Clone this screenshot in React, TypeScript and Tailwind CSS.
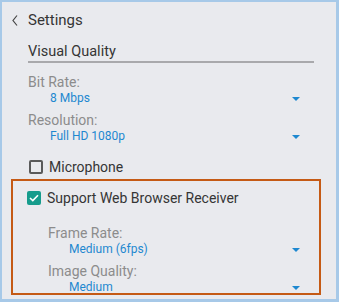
import React from 'react'

const blue = 'text-[#1e88d0]'

function Caret() {
  return (
    <svg width="8" height="4" viewBox="0 0 8 4" className="shrink-0">
      <polygon points="0,0 8,0 4,4" fill="#1e88d0" />
    </svg>
  )
}

function Dropdown({ label, value, valueIndent }: { label: string; value: string; valueIndent: string }) {
  return (
    <div>
      <div className="text-[14px] leading-[16px] text-[#8c8c8c]">{label}</div>
      <div className="flex items-center justify-between h-[17px]">
        <span className={`text-[12px] leading-[17px] ${blue} ${valueIndent}`}>{value}</span>
        <Caret />
      </div>
    </div>
  )
}

export default function App() {
  return (
    <div
      className="w-[339px] h-[302px] bg-[#e9eaee] border-[#a7c9e8] border-l-2 border-t-2 border-r-[3px] border-b-[3px] overflow-hidden"
      style={{ fontFamily: 'Roboto, "Liberation Sans", sans-serif' }}
    >
      {/* Header */}
      <div className="flex items-center h-[37px]">
        <svg width="6" height="11" viewBox="0 0 6 11" className="ml-[10px]">
          <polyline points="5,0.5 1,5.5 5,10.5" fill="none" stroke="#444" strokeWidth="1.2" />
        </svg>
        <span className="ml-[10px] text-[15px] text-[#353535]">Settings</span>
      </div>

      <div className="ml-[26px] w-[286px]">
        {/* Visual Quality */}
        <div className="mt-[3px] text-[14.5px] leading-[19px] text-[#353535]">Visual Quality</div>
        <div className="h-[2px] bg-[#a9a9ac]" />

        <div className="w-[272px]">
          <div className="mt-[11px]">
            <Dropdown label="Bit Rate:" value="8 Mbps" valueIndent="pl-[22px]" />
          </div>
          <div className="mt-[5px]">
            <Dropdown label="Resolution:" value="Full HD 1080p" valueIndent="pl-[22px]" />
          </div>
        </div>

        {/* Microphone */}
        <div className="flex items-center h-[20px] mt-[12px]">
          <span className="w-[14px] h-[14px] ml-[1px] rounded-[2px] border-2 border-[#5a5a5a]" />
          <span className="ml-[6px] text-[14px] text-[#353535]">Microphone</span>
        </div>
      </div>

      {/* Web browser receiver group */}
      <div className="ml-[9px] mt-[2px] w-[310px] h-[116px] border-2 border-[#c55a15]">
        <div className="flex items-center h-[20px] mt-[7px] pl-[14px]">
          <span className="flex items-center justify-center w-[14px] h-[14px] rounded-[2px] bg-[#169c8c]">
            <svg width="10" height="8" viewBox="0 0 10 8">
              <polyline points="1,4 3.8,6.6 9,1.2" fill="none" stroke="#fff" strokeWidth="1.6" />
            </svg>
          </span>
          <span className="ml-[6px] text-[14px] text-[#353535]">Support Web Browser Receiver</span>
        </div>

        <div className="ml-[35px] mr-[19px] mt-[17px]">
          <Dropdown label="Frame Rate:" value="Medium (6fps)" valueIndent="pl-[21px]" />
          <div className="mt-[5px]">
            <Dropdown label="Image Quality:" value="Medium" valueIndent="pl-[21px]" />
          </div>
        </div>
      </div>
    </div>
  )
}
